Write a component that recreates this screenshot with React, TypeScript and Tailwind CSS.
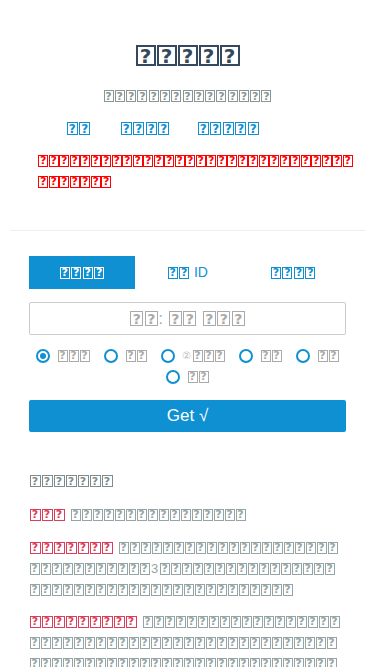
import React from "react";

type V = "title" | "body" | "bodyB" | "link" | "ph" | "tab" | "sub" | "red";

const cls: Record<V, string> = {
  title: "w-[20px] h-[21px] border-2 text-[20px] mx-[0.5px]",
  sub: "w-[10px] h-[12px] border text-[11px] mx-[0.65px]",
  body: "w-[10px] h-[12px] border text-[11px] mx-[0.5px]",
  red: "w-[10px] h-[12px] border text-[11px] mx-[0.25px]",
  bodyB: "w-[11px] h-[12px] border text-[11px] mx-[0.5px]",
  link: "w-[11px] h-[13px] border text-[12px] mx-[0.75px]",
  ph: "w-[13px] h-[15px] border text-[14px] mx-[0.75px]",
  tab: "w-[10px] h-[12px] border text-[11px] mx-[0.75px]",
};

function Q({ n, v, c }: { n: number; v: V; c: string }) {
  return (
    <>
      {Array.from({ length: n }).map((_, i) => (
        <span
          key={i}
          className={`inline-flex items-center justify-center shrink-0 box-border font-bold leading-none align-middle overflow-hidden ${cls[v]} ${c}`}
          style={{ fontFamily: "'DejaVu Sans', 'Liberation Sans', sans-serif" }}
        >
          ?
        </span>
      ))}
    </>
  );
}

function Line({ children, className = "" }: { children: React.ReactNode; className?: string }) {
  return <div className={`flex items-center h-[21px] ${className}`}>{children}</div>;
}

function Radio({ checked, children }: { checked?: boolean; children: React.ReactNode }) {
  return (
    <div className="flex items-center gap-[7px]">
      <span className="w-[14px] h-[14px] rounded-full border-2 border-[#0e90d2] flex items-center justify-center">
        {checked && <span className="w-[6px] h-[6px] rounded-full bg-[#0e90d2]" />}
      </span>
      <span className="flex items-center">{children}</span>
    </div>
  );
}

const G = "text-[#95a5a6] border-[#95a5a6]";
const R = "text-[#dc3d5a] border-[#dc3d5a]";
const RG = "text-[#aaaaaa] border-[#aaaaaa]";

export default function App() {
  return (
    <div className="w-[375px] min-h-[667px] bg-white overflow-hidden" style={{ fontFamily: "'Liberation Sans', Arial, sans-serif" }}>
      <div className="mx-[10px] border-b border-[#eeeeee] pt-[45px] pb-[38px]">
        <div className="flex justify-center h-[21px] items-center">
          <Q n={5} v="title" c="text-[#34495e] border-[#34495e]" />
        </div>
        <div className="flex justify-center h-[12px] items-center mt-[24px]">
          <Q n={15} v="sub" c="text-[#8a9696] border-[#8a9696]" />
        </div>
        <div className="flex h-[13px] items-center mt-[20px] pl-[56px]">
          <div className="flex"><Q n={2} v="link" c="text-[#0e90d2] border-[#0e90d2]" /></div>
          <div className="flex ml-[29px]"><Q n={4} v="link" c="text-[#0e90d2] border-[#0e90d2]" /></div>
          <div className="flex ml-[27px]"><Q n={5} v="link" c="text-[#0e90d2] border-[#0e90d2]" /></div>
        </div>
        <div className="mt-[15px] pl-[28px]">
          <Line><Q n={30} v="red" c="text-[#ff0000] border-[#ff0000]" /></Line>
          <Line><Q n={7} v="red" c="text-[#ff0000] border-[#ff0000]" /></Line>
        </div>
      </div>

      <div className="px-[29px]">
        <div className="grid grid-cols-3 h-[33px] mt-[25px]">
          <div className="bg-[#0e90d2] flex items-center justify-center">
            <Q n={4} v="tab" c="text-white border-white" />
          </div>
          <div className="flex items-center justify-center text-[#0e90d2] text-[14px]">
            <Q n={2} v="tab" c="text-[#0e90d2] border-[#0e90d2]" />
            <span className="ml-[4px]">ID</span>
          </div>
          <div className="flex items-center justify-center">
            <Q n={4} v="tab" c="text-[#0e90d2] border-[#0e90d2]" />
          </div>
        </div>

        <div className="mt-[13px] h-[33px] border border-[#cccccc] rounded-[2px] flex items-center justify-center text-[#aaaaaa] text-[16px]">
          <Q n={2} v="ph" c="text-[#aaaaaa] border-[#aaaaaa]" />
          <span className="mr-[5px]">:</span>
          <Q n={2} v="ph" c="text-[#aaaaaa] border-[#aaaaaa]" />
          <span className="w-[5px]" />
          <Q n={3} v="ph" c="text-[#aaaaaa] border-[#aaaaaa]" />
        </div>

        <div className="mt-[10px] flex flex-wrap justify-center gap-x-[14px]">
          <div className="h-[21px] flex items-center"><Radio checked><Q n={3} v="body" c={RG} /></Radio></div>
          <div className="h-[21px] flex items-center"><Radio><Q n={2} v="body" c={RG} /></Radio></div>
          <div className="h-[21px] flex items-center">
            <Radio>
              <span className="text-[10px] text-[#bbbbbb] mr-[1px]">②</span>
              <Q n={3} v="body" c={RG} />
            </Radio>
          </div>
          <div className="h-[21px] flex items-center"><Radio><Q n={2} v="body" c={RG} /></Radio></div>
          <div className="h-[21px] flex items-center"><Radio><Q n={2} v="body" c={RG} /></Radio></div>
          <div className="h-[21px] flex items-center"><Radio><Q n={2} v="body" c={RG} /></Radio></div>
        </div>

        <button className="mt-[13px] w-full h-[32px] bg-[#0e90d2] rounded-[2px] text-white text-[17px] flex items-center justify-center">
          Get √
        </button>

        <div className="mt-[39px] h-[20px] flex items-center">
          <Q n={7} v="bodyB" c="text-[#7f8c8d] border-[#7f8c8d]" />
        </div>

        <Line className="mt-[13px]">
          <Q n={3} v="bodyB" c={R} />
          <span className="w-[5px]" />
          <Q n={16} v="body" c={G} />
        </Line>

        <div className="mt-[12px]">
          <Line className="h-[20.5px]">
            <Q n={7} v="bodyB" c={R} />
            <span className="w-[5px]" />
            <Q n={20} v="body" c={G} />
          </Line>
          <Line className="h-[20.5px]">
            <Q n={11} v="body" c={G} />
            <span className="text-[#95a5a6] text-[13px] mx-[1px]">3</span>
            <Q n={16} v="body" c={G} />
          </Line>
          <Line className="h-[20.5px]">
            <Q n={24} v="body" c={G} />
          </Line>
        </div>

        <div className="mt-[11px]">
          <Line className="h-[20.5px]">
            <Q n={9} v="bodyB" c={R} />
            <span className="w-[5px]" />
            <Q n={18} v="body" c={G} />
          </Line>
          <Line className="h-[20.5px]">
            <Q n={28} v="body" c={G} />
          </Line>
          <Line className="h-[20.5px]">
            <Q n={28} v="body" c={G} />
          </Line>
        </div>
      </div>
    </div>
  );
}
